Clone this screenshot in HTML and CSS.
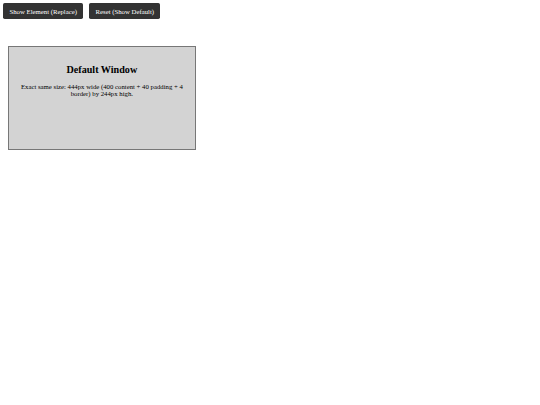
FILE: index.html
```html
<!DOCTYPE html>
<html>
<head>
<meta charset="utf-8">
<link rel="stylesheet" href="styles.css">
</head>
<body>
<div class="controls">
  <button class="btn">Show Element (Replace)</button>
  <button class="btn">Reset (Show Default)</button>
</div>
<div class="stage">
  <div class="window">
    <h2 class="title">Default Window</h2>
    <p class="desc">Exact same size: 444px wide (400 content + 40 padding + 4 border) by 244px high.</p>
  </div>
</div>
</body>
</html>
```
FILE: styles.css
```css
body {
  margin: 3.4px;
  font-family: "Liberation Serif", "Times New Roman", serif;
  background: #fff;
  color: #000;
}
.controls {
  display: flex;
  gap: 6.4px;
}
.btn {
  font-family: "Liberation Serif", "Times New Roman", serif;
  font-size: 6.75px;
  line-height: 7.6px;
  padding: 4.2px 6.1px;
  border: none;
  border-radius: 1.7px;
  background: #333;
  color: #fff;
}
.stage {
  padding: 26.6px 0 0 4.6px;
}
.window {
  width: 168.9px;
  height: 85.6px;
  padding: 8.44px;
  border: 1px solid #777;
  background: #d3d3d3;
  text-align: center;
}
.title {
  font-size: 10.125px;
  margin: 8.4px 0;
}
.desc {
  font-size: 6.75px;
  margin: 6.75px 0;
}
```
